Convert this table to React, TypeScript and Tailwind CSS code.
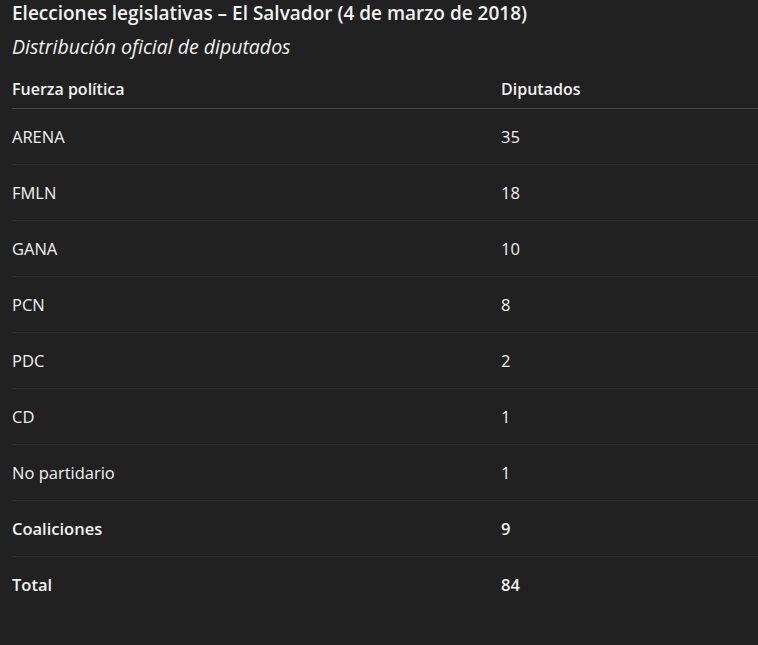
const rows: { name: string; seats: number; strong?: boolean }[] = [
  { name: "ARENA", seats: 35 },
  { name: "FMLN", seats: 18 },
  { name: "GANA", seats: 10 },
  { name: "PCN", seats: 8 },
  { name: "PDC", seats: 2 },
  { name: "CD", seats: 1 },
  { name: "No partidario", seats: 1 },
  { name: "Coaliciones", seats: 9, strong: true },
  { name: "Total", seats: 84, strong: true },
];

export default function App() {
  return (
    <div
      className="min-h-[645px] bg-[#212121] pl-3 text-[#f2f2f2]"
      style={{ fontFamily: '"Open Sans", "Noto Sans", sans-serif' }}
    >
      <h1 className="text-[19px] font-semibold leading-[26px]">
        Elecciones legislativas – El Salvador (4 de marzo de 2018)
      </h1>
      <p className="mt-2 mb-[10px] text-[19.5px] italic leading-[26px]">
        Distribución oficial de diputados
      </p>
      <table className="w-full border-collapse text-left text-[16.5px]">
        <thead>
          <tr className="border-b border-[#474747]">
            <th className="w-[489px] py-2 text-[16px] font-semibold leading-[22px]">Fuerza política</th>
            <th className="py-2 text-[16px] font-semibold leading-[22px]">Diputados</th>
          </tr>
        </thead>
        <tbody>
          {rows.map((r, i) => (
            <tr
              key={r.name}
              className={i < rows.length - 1 ? "border-b border-[#2e2e2e]" : ""}
            >
              <td className={`py-4 leading-[23px] ${r.strong ? "font-semibold" : ""}`}>{r.name}</td>
              <td className={`py-4 leading-[23px] ${r.strong ? "font-semibold" : ""}`}>{r.seats}</td>
            </tr>
          ))}
        </tbody>
      </table>
    </div>
  );
}
